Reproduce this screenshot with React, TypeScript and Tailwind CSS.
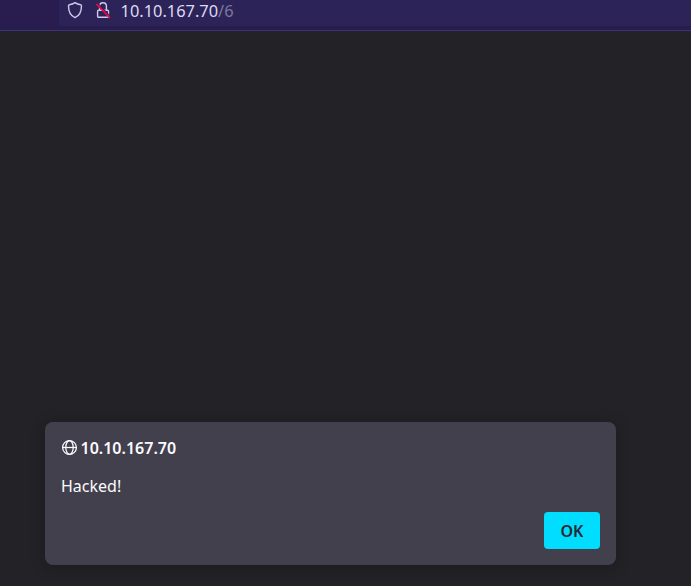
function ShieldIcon() {
  return (
    <svg className="block h-[18px] w-4 shrink-0" viewBox="0 0 16 18" fill="none" stroke="#cfc8ea" strokeWidth="1.4" strokeLinejoin="round">
      <path d="M8 1.600C9.800 2.900 11.900 3.500 13.800 3.800Q14.500 4 14.500 4.800C14.500 11.500 12.300 14.900 8 16.700C3.700 14.900 1.500 11.500 1.500 4.800Q1.500 4 2.200 3.800C4.100 3.500 6.200 2.900 8 1.600Z" />
    </svg>
  );
}

function InsecureLockIcon() {
  return (
    <svg className="block h-[18px] w-4 shrink-0" viewBox="0 0 16 18" fill="none">
      <path d="M4.600 9V5.200a3.400 3.400 0 0 1 6.800 0V9" stroke="#cfc8ea" strokeWidth="1.400" />
      <rect x="2.600" y="9.200" width="10.900" height="7.100" rx="1" stroke="#cfc8ea" strokeWidth="1.400" />
      <path d="m2.700 2.400 12.600 13" stroke="#2c2458" strokeWidth="1.200" />
      <path d="m1.800 3.400 12.700 13" stroke="#f0063f" strokeWidth="1.600" strokeLinecap="round" />
    </svg>
  );
}

function GlobeIcon() {
  return (
    <svg className="block size-4 shrink-0" viewBox="0 0 16 16" fill="none" stroke="#fbfbfe" strokeWidth="1.250">
      <circle cx="8.500" cy="7.500" r="6.900" />
      <ellipse cx="8.500" cy="7.500" rx="3.700" ry="6.900" />
      <path d="M1.600 7.500h13.800" />
    </svg>
  );
}

export default function App() {
  return (
    <div className="flex h-[586px] w-[691px] flex-col overflow-hidden bg-[#232227] font-['Noto_Sans',sans-serif]">
      <header className="flex h-[31px] shrink-0 items-start border-b border-[#3b3277] bg-[#291d4f] pl-[59px]">
        <div className="flex h-[26px] flex-1 items-start rounded-bl bg-[#2c2458] pl-2">
          <div className="pt-px">
            <ShieldIcon />
          </div>
          <div className="ml-3 pt-px">
            <InsecureLockIcon />
          </div>
          <p className="ml-[9.500px] text-[16.400px] leading-[22px] text-[#dedaf3]">
            10.10.167.70<span className="text-[#7d769f]">/6</span>
          </p>
        </div>
      </header>
      <main className="flex flex-1 items-end pb-[21px] pl-[45px]">
        <section className="flex h-[143px] w-[571px] flex-col rounded-lg bg-[#43404d] p-4 text-[#fbfbfe] shadow-[0_2px_14px_rgba(12,12,13,0.35)]">
          <div className="flex h-5 items-center gap-[3.500px]">
            <GlobeIcon />
            <h1 className="text-base font-semibold leading-5">10.10.167.70</h1>
          </div>
          <p className="mt-[18px] text-base leading-5">Hacked!</p>
          <button className="mt-auto flex h-[37px] w-14 items-center justify-center self-end rounded bg-[#00ddff] text-base font-semibold text-[#2b2a33]">
            OK
          </button>
        </section>
      </main>
    </div>
  );
}
